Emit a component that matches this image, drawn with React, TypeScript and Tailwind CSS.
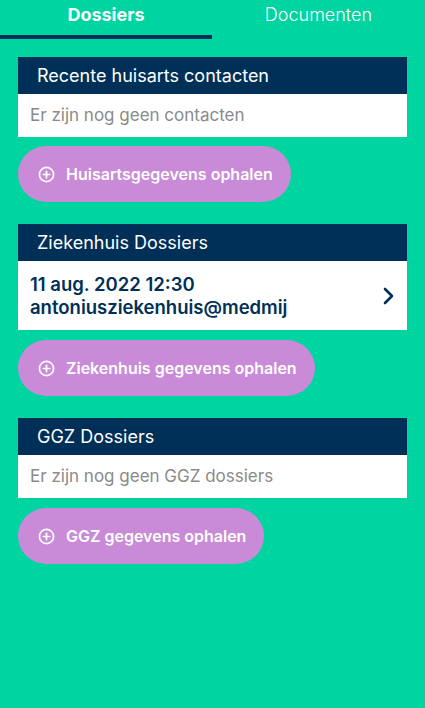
import React from 'react';

const font = { fontFamily: 'Inter, "Noto Sans", sans-serif' };

function PlusCircle() {
  return (
    <svg width="17" height="17" viewBox="0 0 24 24" fill="none" stroke="currentColor" strokeWidth="2.4" strokeLinecap="round">
      <circle cx="12" cy="12" r="10" />
      <line x1="12" y1="7.5" x2="12" y2="16.5" />
      <line x1="7.5" y1="12" x2="16.5" y2="12" />
    </svg>
  );
}

function ActionButton({ label }: { label: string }) {
  return (
    <button className="flex items-center self-start h-[56px] pl-[20px] pr-[18px] rounded-full bg-[#c98ad8] text-white">
      <PlusCircle />
      <span className="ml-[11px] text-[16px] font-semibold tracking-[0px]">{label}</span>
    </button>
  );
}

function CardHeader({ title }: { title: string }) {
  return (
    <div className="h-[37px] bg-[#003057] flex items-center pl-[19px] text-white text-[18px]">
      {title}
    </div>
  );
}

function EmptyCard({ title, text }: { title: string; text: string }) {
  return (
    <div>
      <CardHeader title={title} />
      <div className="h-[43px] bg-white flex items-center pl-[12px] text-[#8a8a8a] text-[17px]">
        {text}
      </div>
    </div>
  );
}

export default function App() {
  return (
    <div className="w-[425px] h-[708px] bg-[#00d4a1] overflow-hidden" style={font}>
      <div className="flex h-[39px]">
        <div className="w-[212px] flex flex-col">
          <div className="flex-1 flex items-start justify-center pt-[1px] text-white font-bold text-[18px]">
            Dossiers
          </div>
          <div className="h-[4px] bg-[#003057]" />
        </div>
        <div className="flex-1 flex items-start justify-center pt-[1px] text-white text-[18px] font-light">
          Documenten
        </div>
      </div>

      <div className="px-[18px] pt-[18px] flex flex-col">
        <EmptyCard title="Recente huisarts contacten" text="Er zijn nog geen contacten" />
        <div className="mt-[9px] flex flex-col">
          <ActionButton label="Huisartsgegevens ophalen" />
        </div>

        <div className="mt-[22px]">
          <CardHeader title="Ziekenhuis Dossiers" />
          <div className="h-[69px] bg-white flex items-center justify-between pl-[12px] pr-[13px] text-[#003057]">
            <div className="text-[18.5px] font-semibold leading-[23px]">
              <div>11 aug. 2022 12:30</div>
              <div>antoniusziekenhuis@medmij</div>
            </div>
            <svg width="12" height="18" viewBox="0 0 12 18" fill="none" stroke="#003057" strokeWidth="2.6" strokeLinecap="round" strokeLinejoin="round">
              <polyline points="3,2 10,9 3,16" />
            </svg>
          </div>
        </div>
        <div className="mt-[10px] flex flex-col">
          <ActionButton label="Ziekenhuis gegevens ophalen" />
        </div>

        <div className="mt-[22px]">
          <EmptyCard title="GGZ Dossiers" text="Er zijn nog geen GGZ dossiers" />
        </div>
        <div className="mt-[10px] flex flex-col">
          <ActionButton label="GGZ gegevens ophalen" />
        </div>
      </div>
    </div>
  );
}
